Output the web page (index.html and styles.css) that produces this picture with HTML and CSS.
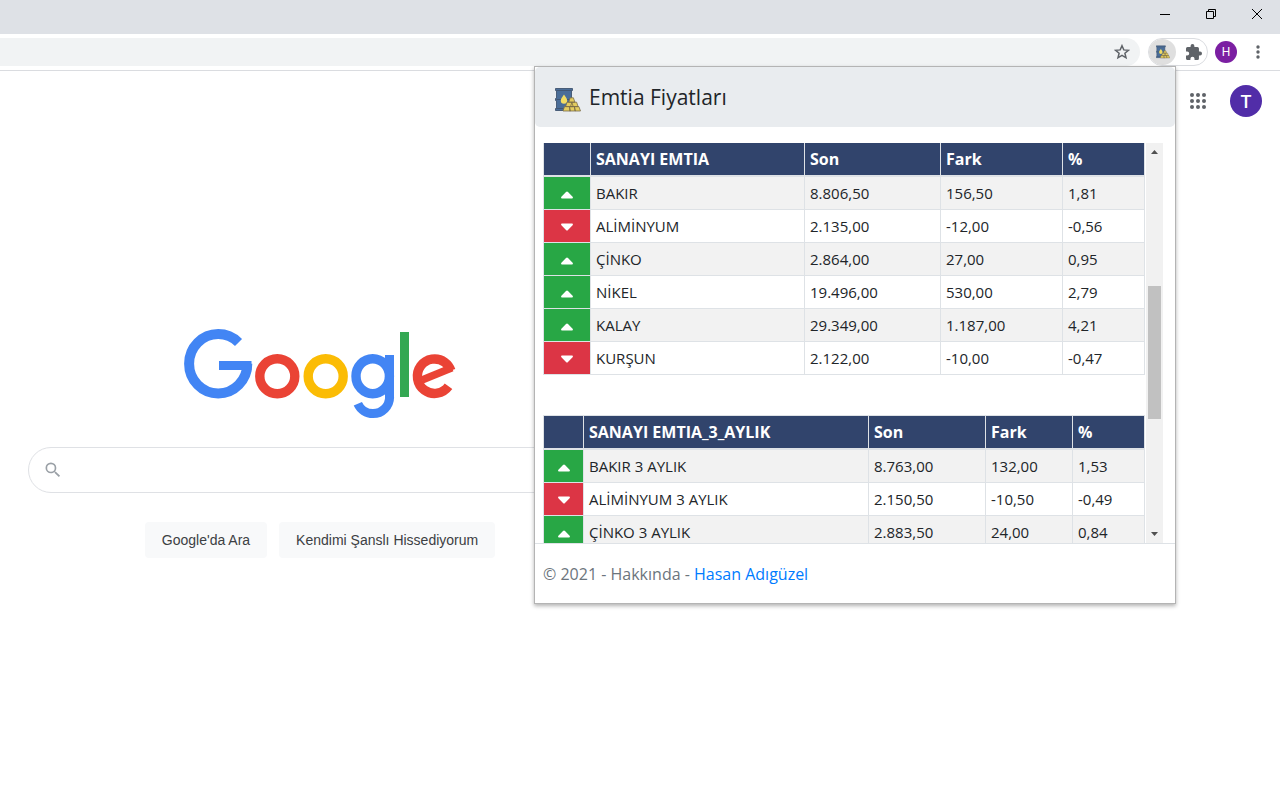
FILE: index.html
```html
<!DOCTYPE html>
<html lang="tr">
<head>
<meta charset="utf-8">
<title>Emtia Fiyatları</title>
<link rel="stylesheet" href="styles.css">
</head>
<body>
<svg class="defs" width="0" height="0" aria-hidden="true">
  <symbol id="up" viewBox="0 0 12 12"><path d="M1.2 11.5h9.6c1 0 1.5-1 .8-1.7L7 5.1a1.4 1.4 0 0 0-2 0L.4 9.8c-.7.7-.2 1.7.8 1.7z" fill="#fff"/></symbol>
  <symbol id="down" viewBox="0 0 12 12"><path d="M1.2 3.5h9.6c1 0 1.5 1 .8 1.7L7 9.900a1.4 1.4 0 0 1-2 0L.4 5.2c-.7-.7-.2-1.7.8-1.7z" fill="#fff"/></symbol>
  <symbol id="commodity" viewBox="0 0 26 26">
    <path d="M.5 1.500h17v2h-1v8h1v2h-1v8h1v2H.5v-2h1v-8h-1v-2h1v-8h-1z" fill="#4a6d98" stroke="#40546f" stroke-width=".9"/>
    <path d="M1.500 3.500h15M1.500 12.500h15M1.500 21.500h15" stroke="#40546f" stroke-width=".9"/>
    <path d="M9 7.500c2 2.800 3.200 4.300 3.200 6a3.200 3.200 0 0 1-6.400 0c0-1.700 1.200-3.200 3.200-6z" fill="#f2dc63"/>
    <path d="M15.200 10.800h3.200l1.500 4.400h-6.200zM12 15.200h4.900l1.300 4.400h-7.600zM16.900 15.200h4.700l1.500 4.400h-7.600zM9.500 19.600h5l.9 4.400H8zM14.500 19.600h4.900l.9 4.400h-5.600zM19.400 19.600h4.500l1.600 4.400h-5.500z" fill="#e3cc5f" stroke="#7a6c48" stroke-width=".8"/>
  </symbol>
</svg>

<div class="titlebar">
  <button class="win" aria-label="Simge durumuna küçült"><svg width="12" height="12" viewBox="0 0 12 12"><path d="M1 6.500h10" stroke="#000"/></svg></button>
  <button class="win" aria-label="Önceki boyut"><svg width="12" height="12" viewBox="0 0 12 12" fill="none" stroke="#000"><path d="M1.500 3.500h7v7h-7zM3.500 3.500v-2h7v7h-2"/></svg></button>
  <button class="win" aria-label="Kapat"><svg width="12" height="12" viewBox="0 0 12 12"><path d="M1 1l10 10M11 1L1 11" stroke="#000"/></svg></button>
</div>

<div class="toolbar">
  <div class="omnibox">
    <button class="plain" aria-label="Yer işareti"><svg width="16" height="16" viewBox="0 0 16 16"><path d="M8 1.700l1.800 4.200 4.600.4-3.500 3 1.100 4.500L8 11.400l-4 2.400 1.100-4.500-3.500-3 4.600-.4z" fill="none" stroke="#5f6368" stroke-width="1.500"/></svg></button>
  </div>
  <div class="extensions">
    <button class="plain ext-active" aria-label="Emtia Fiyatları"><svg width="14" height="14"><use href="#commodity"/></svg></button>
    <button class="plain ext-menu" aria-label="Uzantılar"><svg width="16" height="16" viewBox="2 1 21 21"><path d="M20.500 11H19V7a2 2 0 0 0-2-2h-4V3.500a2.500 2.500 0 0 0-5 0V5H4a2 2 0 0 0-2 2v3.800h1.500a2.700 2.700 0 0 1 0 5.400H2V20c0 1.100.9 2 2 2h3.800v-1.500a2.700 2.700 0 0 1 5.400 0V22H17a2 2 0 0 0 2-2v-4h1.500a2.500 2.500 0 0 0 0-5z" fill="#5f6368"/></svg></button>
  </div>
  <button class="profile" aria-label="Profil">H</button>
  <button class="plain more" aria-label="Menü"><svg width="4" height="14" viewBox="0 0 4 14" fill="#5f6368"><circle cx="2" cy="2" r="1.700"/><circle cx="2" cy="7" r="1.700"/><circle cx="2" cy="12" r="1.700"/></svg></button>
</div>

<header class="account">
  <button class="plain" aria-label="Google uygulamaları"><svg width="16" height="16" viewBox="0 0 16 16" fill="#5f6368"><circle cx="2" cy="2" r="2"/><circle cx="8" cy="2" r="2"/><circle cx="14" cy="2" r="2"/><circle cx="2" cy="8" r="2"/><circle cx="8" cy="8" r="2"/><circle cx="14" cy="8" r="2"/><circle cx="2" cy="14" r="2"/><circle cx="8" cy="14" r="2"/><circle cx="14" cy="14" r="2"/></svg></button>
  <button class="avatar" aria-label="Google Hesabı">T</button>
</header>

<main class="search-page">
  <svg class="logo" width="272" height="92" viewBox="0 0 272 92" role="img" aria-label="Google" fill="none" stroke-width="9.400">
    <ellipse cx="34.200" cy="34.700" rx="29.100" ry="29.700" stroke="#4285f4" stroke-width="10" pathLength="360" stroke-dasharray="314 46"/>
    <rect x="35" y="32" width="32.500" height="9" fill="#4285f4"/>
    <ellipse cx="93.300" cy="47.200" rx="17.500" ry="17.500" stroke="#ea4335"/>
    <ellipse cx="141.700" cy="47.200" rx="17.500" ry="17.500" stroke="#fbbc05"/>
    <ellipse cx="188.700" cy="47.200" rx="16.700" ry="17.500" stroke="#4285f4"/>
    <rect x="201" y="26" width="9" height="43" fill="#4285f4"/>
    <circle cx="189" cy="68" r="16.600" stroke="#4285f4" stroke-width="9" pathLength="360" stroke-dasharray="156 204"/>
    <rect x="216" y="3" width="9" height="65" fill="#34a853"/>
    <circle cx="250.600" cy="47.200" r="17.200" stroke="#ea4335" pathLength="360" stroke-dasharray="305 55" transform="rotate(36 250.600 47.200)"/>
    <line x1="238" y1="51" x2="268" y2="38.700" stroke="#ea4335" stroke-width="7.600"/>
  </svg>
  <form class="search-form">
    <div class="search-box">
      <svg width="20" height="20" viewBox="0 0 24 24"><path d="M15.500 14h-.79l-.28-.27A6.470 6.470 0 0 0 16 9.500 6.500 6.500 0 1 0 9.500 16c1.610 0 3.090-.59 4.230-1.570l.27.28v.79l5 4.990L20.490 19l-4.990-5zm-6 0a4.500 4.500 0 1 1 0-9 4.500 4.500 0 0 1 0 9z" fill="#9aa0a6"/></svg>
      <input type="text" aria-label="Ara">
      <svg width="19" height="11" viewBox="0 0 19 11"><path d="M0 0h19v11H0z" fill="#5f6368"/></svg>
    </div>
    <div class="search-actions">
      <button type="button">Google'da Ara</button>
      <button type="button">Kendimi Şanslı Hissediyorum</button>
    </div>
  </form>
</main>

<section class="popup">
  <header class="popup-head">
    <svg width="26" height="26" aria-hidden="true"><use href="#commodity"/></svg>
    <h1>Emtia Fiyatları</h1>
  </header>
  <div class="popup-body">
    <div class="tables">
      <table class="spot">
        <colgroup><col class="c1"><col class="c2"><col class="c3"><col class="c4"><col class="c5"></colgroup>
        <thead><tr><th></th><th>SANAYI EMTIA</th><th>Son</th><th>Fark</th><th>%</th></tr></thead>
        <tbody>
          <tr><td class="rise"><svg><use href="#up"/></svg></td><td>BAKIR</td><td>8.806,50</td><td>156,50</td><td>1,81</td></tr>
          <tr><td class="fall"><svg><use href="#down"/></svg></td><td>ALİMİNYUM</td><td>2.135,00</td><td>-12,00</td><td>-0,56</td></tr>
          <tr><td class="rise"><svg><use href="#up"/></svg></td><td>ÇİNKO</td><td>2.864,00</td><td>27,00</td><td>0,95</td></tr>
          <tr><td class="rise"><svg><use href="#up"/></svg></td><td>NİKEL</td><td>19.496,00</td><td>530,00</td><td>2,79</td></tr>
          <tr><td class="rise"><svg><use href="#up"/></svg></td><td>KALAY</td><td>29.349,00</td><td>1.187,00</td><td>4,21</td></tr>
          <tr><td class="fall"><svg><use href="#down"/></svg></td><td>KURŞUN</td><td>2.122,00</td><td>-10,00</td><td>-0,47</td></tr>
        </tbody>
      </table>
      <table class="quarter">
        <colgroup><col class="c1"><col class="c2"><col class="c3"><col class="c4"><col class="c5"></colgroup>
        <thead><tr><th></th><th>SANAYI EMTIA_3_AYLIK</th><th>Son</th><th>Fark</th><th>%</th></tr></thead>
        <tbody>
          <tr><td class="rise"><svg><use href="#up"/></svg></td><td>BAKIR 3 AYLIK</td><td>8.763,00</td><td>132,00</td><td>1,53</td></tr>
          <tr><td class="fall"><svg><use href="#down"/></svg></td><td>ALİMİNYUM 3 AYLIK</td><td>2.150,50</td><td>-10,50</td><td>-0,49</td></tr>
          <tr><td class="rise"><svg><use href="#up"/></svg></td><td>ÇİNKO 3 AYLIK</td><td>2.883,50</td><td>24,00</td><td>0,84</td></tr>
        </tbody>
      </table>
    </div>
    <div class="scrollbar" aria-hidden="true">
      <svg width="17" height="17" viewBox="0 0 17 17"><path d="M5 11h7L8.500 7z" fill="#505050"/></svg>
      <div class="track"><div class="thumb"></div></div>
      <svg width="17" height="17" viewBox="0 0 17 17"><path d="M5 6h7l-3.500 4z" fill="#505050"/></svg>
    </div>
  </div>
  <footer class="popup-foot">© 2021 - Hakkında - <a href="#">Hasan Adıgüzel</a></footer>
</section>
</body>
</html>
```
FILE: styles.css
```css
* { box-sizing: border-box; }

body {
  margin: 0;
  min-height: 100vh;
  background: #fff;
  font-family: "Liberation Sans", Arial, sans-serif;
  overflow: hidden;
}

button {
  border: 0;
  padding: 0;
  background: none;
  font-family: inherit;
}

.defs { position: absolute; }

.titlebar {
  display: flex;
  justify-content: flex-end;
  height: 34px;
  padding-bottom: 6px;
  background: #dee1e6;
}

.win {
  display: flex;
  align-items: center;
  justify-content: center;
  width: 46px;
}

.toolbar {
  display: flex;
  align-items: center;
  height: 37px;
  padding-right: 12px;
  border-bottom: 1px solid #dadce0;
}

.omnibox {
  display: flex;
  flex: 1;
  align-items: center;
  justify-content: flex-end;
  height: 28px;
  padding-right: 10px;
  border-radius: 0 14px 14px 0;
  background: #f1f3f4;
}

.plain {
  display: flex;
  align-items: center;
  justify-content: center;
}

.extensions {
  display: flex;
  width: 60px;
  height: 28px;
  margin-left: 8px;
  border: 1px solid #dadce0;
  border-radius: 14px;
}

.ext-active {
  width: 27px;
  border-radius: 50%;
  background: #dfdfdf;
}

.ext-menu {
  flex: 1;
  padding-left: 4px;
}

.profile {
  width: 22px;
  height: 22px;
  margin-left: 7px;
  border-radius: 50%;
  background: #7b1fa2;
  color: #fff;
  font: 12px Roboto, sans-serif;
}

.more {
  width: 20px;
  margin-left: 11px;
}

.account {
  display: flex;
  align-items: center;
  justify-content: flex-end;
  gap: 24px;
  height: 60px;
  padding-right: 18px;
}

.avatar {
  width: 32px;
  height: 32px;
  border-radius: 50%;
  background: #512da8;
  color: #fff;
  font: 500 18px Roboto, sans-serif;
}

.search-page {
  display: flex;
  flex-direction: column;
  align-items: center;
  width: 50%;
  padding-top: 198px;
}

.logo { display: block; }

.search-form {
  width: 100%;
  max-width: 584px;
  margin-top: 26px;
}

.search-box {
  display: flex;
  align-items: center;
  height: 46px;
  padding: 0 58px 0 14px;
  border: 1px solid #dfe1e5;
  border-radius: 24px;
}

.search-box input {
  flex: 1;
  min-width: 0;
  margin: 0 12px;
  border: 0;
  outline: 0;
  font-size: 16px;
}

.search-actions {
  display: flex;
  justify-content: center;
  gap: 12px;
  margin-top: 29px;
}

.search-actions button {
  height: 36px;
  padding: 0 17px;
  border-radius: 4px;
  background: #f8f9fa;
  color: #3c4043;
  font-size: 14px;
}

.popup {
  position: absolute;
  top: 66px;
  right: 104px;
  width: 642px;
  border: 1px solid #b4b4b4;
  background: #fff;
  box-shadow: 0 2px 4px rgba(0, 0, 0, 0.3);
  color: #212529;
  font-family: "Segoe UI", "Open Sans", "Noto Sans", sans-serif;
  font-size: 15px;
  line-height: 24px;
}

.popup-head {
  display: flex;
  align-items: center;
  gap: 8px;
  height: 60px;
  padding: 5px 20px 0;
  border-radius: 5px;
  background: #e9ecef;
}

.popup-head h1 {
  margin: 0;
  padding-bottom: 6px;
  font-size: 21px;
  font-weight: 400;
  line-height: 30px;
}

.popup-body {
  display: flex;
  gap: 1px;
  height: 400px;
  margin-top: 16px;
  padding: 0 12px 0 8px;
}

.tables {
  flex: 1;
  overflow: hidden;
}

table {
  width: 602px;
  table-layout: fixed;
  border-collapse: collapse;
}

table + table { margin-top: 40px; }

.spot .c1 { width: 47px; }
.spot .c2 { width: 214px; }
.spot .c3 { width: 136px; }
.spot .c4 { width: 122px; }

.quarter .c1 { width: 40px; }
.quarter .c2 { width: 285px; }
.quarter .c3 { width: 117px; }
.quarter .c4 { width: 87px; }

th, td {
  padding: 4px 5px;
  border: 1px solid #dee2e6;
  text-align: left;
}

th {
  height: 33px;
  border-bottom-width: 2px;
  background: #31446c;
  color: #fff;
  font-size: 16px;
  font-weight: 700;
}

.spot th { border-top: 0; }

tbody tr:nth-child(odd) { background: #f2f2f2; }

.rise, .fall {
  text-align: center;
  line-height: 0;
}

.rise { background: #28a745; }
.fall { background: #dc3545; }

td svg {
  width: 12px;
  height: 12px;
}

.scrollbar {
  display: flex;
  flex-direction: column;
  width: 17px;
  background: #f1f1f1;
}

.track {
  flex: 1;
  padding: 126px 2px 0;
}

.thumb {
  height: 133px;
  background: #c1c1c1;
}

.popup-foot {
  height: 60px;
  padding: 18px 8px 0;
  border-top: 1px solid #dee2e6;
  color: #6c757d;
  font-size: 16px;
}

.popup-foot a {
  color: #007bff;
  text-decoration: none;
}
```
